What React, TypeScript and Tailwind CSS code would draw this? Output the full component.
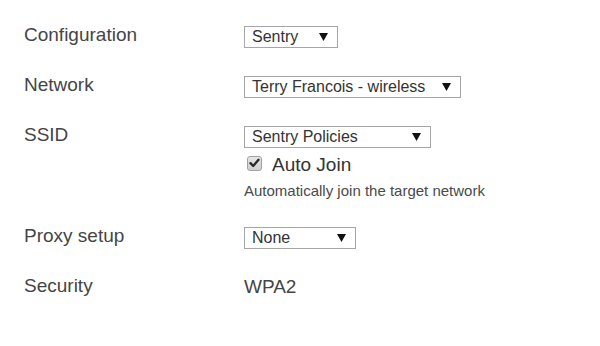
import React from "react";

function Arrow() {
  return (
    <svg width="9" height="8" viewBox="0 0 9 8" className="shrink-0">
      <polygon points="0,0 9,0 4.5,8" fill="#111" />
    </svg>
  );
}

function Select({ value, width }: { value: string; width: string }) {
  return (
    <div
      className={`flex h-[22px] items-center justify-between border border-[#a6a6a6] bg-white pl-[7px] pr-[9px] text-[16px] leading-[20px] text-[#333] ${width}`}
    >
      <span>{value}</span>
      <Arrow />
    </div>
  );
}

function Label({ children }: { children: React.ReactNode }) {
  return (
    <div className="w-[220px] shrink-0 mt-[-2px] text-[19px] leading-[22px] text-[#454545]">
      {children}
    </div>
  );
}

export default function App() {
  return (
    <div
      className="h-[346px] w-[600px] bg-white pl-[24px] pt-[26px]"
      style={{ fontFamily: '"Liberation Sans", Arial, sans-serif' }}
    >
      <div className="flex items-start">
        <Label>Configuration</Label>
        <Select value="Sentry" width="w-[94px]" />
      </div>
      <div className="mt-[28px] flex items-start">
        <Label>Network</Label>
        <Select value="Terry Francois - wireless" width="w-[217px]" />
      </div>
      <div className="mt-[28px] flex items-start">
        <Label>SSID</Label>
        <div className="flex flex-col">
          <Select value="Sentry Policies" width="w-[187px]" />
          <div className="mt-[6px] flex h-[22px] items-center">
            <div className="ml-[3px] mt-[-4px] flex h-[15px] w-[15px] items-center justify-center rounded-[3px] border border-[#a0a0a0] bg-gradient-to-b from-[#e6e6e6] to-[#cfcfcf]">
              <svg width="11" height="10" viewBox="0 0 11 10">
                <path
                  d="M1.5 5.2 L4.2 8 L9.5 1.8"
                  fill="none"
                  stroke="#2a2a2a"
                  strokeWidth="2.4"
                  strokeLinecap="round"
                  strokeLinejoin="round"
                />
              </svg>
            </div>
            <span className="ml-[10px] text-[19px] leading-[22px] text-[#333]">
              Auto Join
            </span>
          </div>
          <div className="mt-[5px] text-[15px] leading-[20px] text-[#4a4a4a]">
            Automatically join the target network
          </div>
        </div>
      </div>
      <div className="mt-[26px] flex items-start">
        <Label>Proxy setup</Label>
        <Select value="None" width="w-[112px]" />
      </div>
      <div className="mt-[28px] flex items-start">
        <Label>Security</Label>
        <div className="mt-[-1px] text-[19px] leading-[22px] text-[#454545]">WPA2</div>
      </div>
    </div>
  );
}
